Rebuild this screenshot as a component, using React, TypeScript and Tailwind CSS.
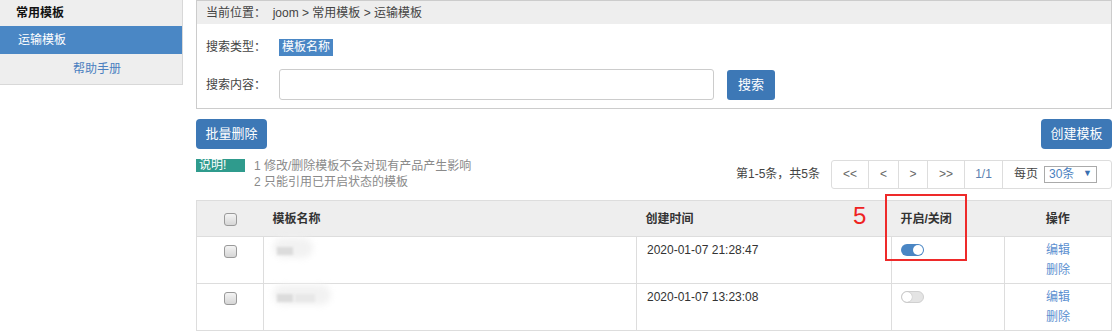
import React from "react";

const font = "font-['Liberation_Sans','Noto_Sans_CJK_SC',sans-serif]";

const Checkbox = () => (
  <span className="inline-block w-[13px] h-[13px] rounded-[3px] border border-[#9a9a9a] bg-gradient-to-b from-[#f4f4f4] to-[#d6d6d6] align-middle" />
);

const Toggle = ({ on }: { on: boolean }) =>
  on ? (
    <span className="relative inline-block w-[23px] h-[12px] rounded-full bg-[#4a86c4]">
      <span className="absolute right-[1px] top-[1px] w-[10px] h-[10px] rounded-full bg-white" />
    </span>
  ) : (
    <span className="relative inline-block w-[23px] h-[12px] rounded-full bg-[#e4e4e4] border border-[#d0d0d0]">
      <span className="absolute left-0 top-0 w-[10px] h-[10px] rounded-full bg-white shadow-[0_0_1px_#999]" />
    </span>
  );

const rows = [
  { time: "2020-01-07 21:28:47", on: true, blob: "w-[40px]" },
  { time: "2020-01-07 13:23:08", on: false, blob: "w-[58px]" },
];

export default function App() {
  return (
    <div className={`flex w-[1117px] h-[331px] overflow-hidden bg-white text-[12px] text-[#333] ${font}`}>
      {/* sidebar */}
      <div className="w-[183px] shrink-0">
        <div className="bg-[#eeeeee] border-r border-b border-[#d8d8d8]">
          <div className="h-[26px] pl-[16px] flex items-center font-bold text-[#111]">常用模板</div>
          <div className="h-[28px] pl-[18px] flex items-center bg-[#4a87c5] text-white">运输模板</div>
          <div className="h-[30px] flex items-center justify-center pl-[12px] text-[#4a7fc0]">帮助手册</div>
        </div>
      </div>

      {/* main */}
      <div className="ml-[13px] w-[916px] shrink-0">
        <div className="border border-[#cccccc]">
          <div className="h-[23px] bg-[#eeeeee] pl-[9px] flex items-center text-[#444]">
            当前位置：&nbsp;&nbsp;joom &gt; 常用模板 &gt; 运输模板
          </div>
          <div className="pl-[9px] pt-[13px] pb-[8px]">
            <div className="flex items-center h-[20px]">
              <span className="w-[73px] text-[#444]">搜索类型：</span>
              <span className="bg-[#4a87c5] text-white px-[3px] leading-[17px]">模板名称</span>
            </div>
            <div className="flex items-center mt-[12px]">
              <span className="w-[73px] text-[#444]">搜索内容：</span>
              <span className="w-[435px] h-[31px] border border-[#cccccc] rounded-[3px]" />
              <button className="ml-[13px] w-[48px] h-[30px] rounded-[3px] bg-[#3d78b6] text-white text-[13px]">
                搜索
              </button>
            </div>
          </div>
        </div>

        <div className="flex justify-between mt-[10px]">
          <button className="w-[71px] h-[30px] rounded-[4px] bg-[#3d78b6] text-white text-[13px]">批量删除</button>
          <button className="w-[71px] h-[30px] rounded-[4px] bg-[#3d78b6] text-white text-[13px]">创建模板</button>
        </div>

        <div className="flex justify-between mt-[9px]">
          <div className="flex items-start">
            <span className="w-[49px] h-[13px] bg-[#2f9b8d] text-white text-[12px] leading-[13px] pl-[3px] mt-[1px]">说明!</span>
            <div className="ml-[9px] text-[#8a8a8a] leading-[16px]">
              <div>1 修改/删除模板不会对现有产品产生影响</div>
              <div>2 只能引用已开启状态的模板</div>
            </div>
          </div>
          <div className="flex items-center">
            <span className="text-[#444] mr-[11px]">第1-5条，共5条</span>
            <div className="flex h-[29px] border border-[#dddddd] rounded-[3px] text-[#666]">
              <span className="w-[37px] flex items-center justify-center border-r border-[#dddddd]">&lt;&lt;</span>
              <span className="w-[30px] flex items-center justify-center border-r border-[#dddddd]">&lt;</span>
              <span className="w-[29px] flex items-center justify-center border-r border-[#dddddd]">&gt;</span>
              <span className="w-[37px] flex items-center justify-center border-r border-[#dddddd]">&gt;&gt;</span>
              <span className="w-[38px] flex items-center justify-center border-r border-[#dddddd] text-[#5b7fb0]">1/1</span>
              <span className="w-[108px] flex items-center pl-[11px] text-[#444]">
                每页
                <span className="ml-[6px] w-[53px] h-[17px] border border-[#aaaaaa] flex items-center justify-between px-[4px] text-[#4a7fc0]">
                  30条<span className="text-[9px] text-[#3a6fb0]">▼</span>
                </span>
              </span>
            </div>
          </div>
        </div>

        <div className="relative mt-[10px]">
          <table className="w-[916px] border-collapse border border-[#dddddd] table-fixed">
            <thead>
              <tr className="h-[36px] bg-[#eeeeee] font-bold text-[#333] border-b border-[#dddddd]">
                <th className="w-[67px] text-center font-normal"><Checkbox /></th>
                <th className="w-[373px] text-left pl-[9px]">模板名称</th>
                <th className="w-[255px] text-left pl-[9px]">创建时间</th>
                <th className="w-[113px] text-left pl-[9px]">开启/关闭</th>
                <th className="text-center">操作</th>
              </tr>
            </thead>
            <tbody>
              {rows.map((r, i) => (
                <tr key={i} className="h-[47px] border-b border-[#dddddd]">
                  <td className="align-top text-center pt-[5px]"><Checkbox /></td>
                  <td className="align-top border-l border-[#dddddd] pl-[9px] pt-[1px]">
                    <div className={`relative h-[20px] ${r.blob}`}>
                      <span className={`absolute inset-0 rounded-full bg-[#f2f2f2] blur-[3px]`} />
                      <span className="absolute left-[4px] top-[9px] w-[16px] h-[8px] bg-[#dcdcdc] blur-[1px]" />
                      {i === 1 && <span className="absolute left-[22px] top-[9px] w-[20px] h-[8px] bg-[#e8e8e8] blur-[1px]" />}
                    </div>
                  </td>
                  <td className="align-top border-l border-[#dddddd] pl-[10px] pt-[4px] text-[#333]">{r.time}</td>
                  <td className="align-top border-l border-[#dddddd] pl-[9px] pt-[6px]"><Toggle on={r.on} /></td>
                  <td className="align-top border-l border-[#dddddd] text-center pt-[3px] text-[#5b8fd0] leading-[20px]">
                    <div>编辑</div>
                    <div>删除</div>
                  </td>
                </tr>
              ))}
            </tbody>
          </table>
          <span className="absolute left-[657px] top-[2px] text-[24px] leading-[28px] text-[#ee2222] font-['Liberation_Sans',sans-serif]">5</span>
          <span className="absolute left-[689px] top-[-6px] w-[82px] h-[67px] border-2 border-[#ee2a2a]" />
        </div>
      </div>
    </div>
  );
}
